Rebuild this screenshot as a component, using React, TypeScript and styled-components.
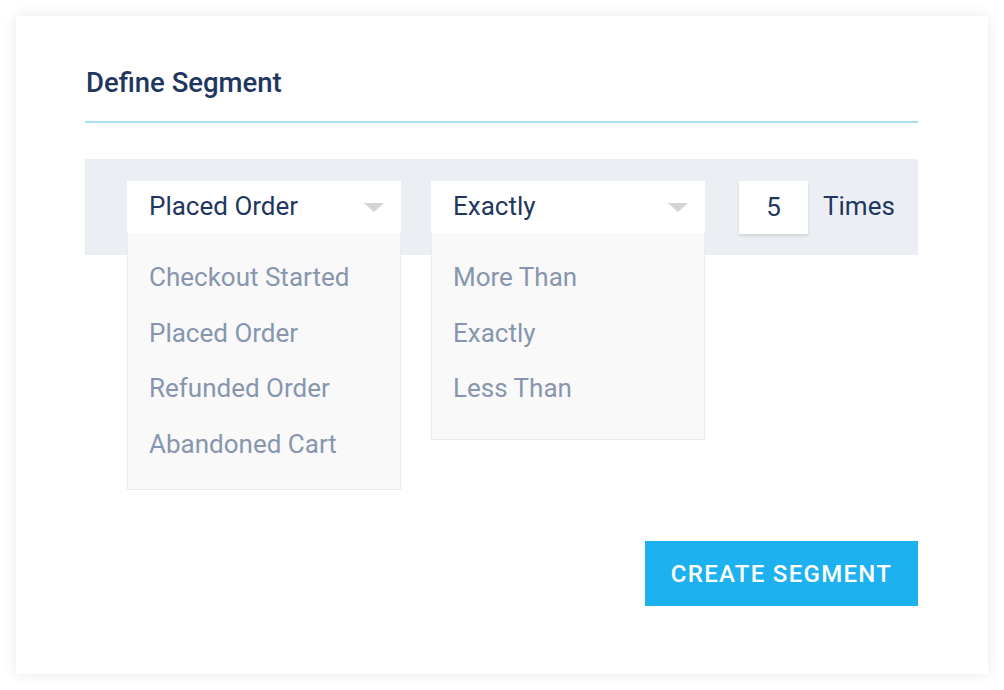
import React from "react";
import styled, { createGlobalStyle } from "styled-components";

const GlobalStyle = createGlobalStyle`
  html, body {
    margin: 0;
    padding: 0;
    background: #ffffff;
    font-family: Roboto, "Liberation Sans", sans-serif;
  }
`;

const Page = styled.div`
  width: 1004px;
  height: 690px;
  padding: 16px;
  box-sizing: border-box;
`;

const Card = styled.section`
  width: 972px;
  height: 658px;
  box-sizing: border-box;
  background: #ffffff;
  box-shadow: 0 0 14px rgba(0, 0, 0, 0.09);
  padding: 51px 70px 68px 69px;
  display: flex;
  flex-direction: column;
`;

const Title = styled.h2`
  margin: 0;
  padding: 0 0 22px 1px;
  font-size: 27.5px;
  font-weight: 500;
  line-height: 32px;
  color: #1f375f;
  border-bottom: 2px solid #a6dff6;
`;

const Band = styled.div`
  margin-top: 36px;
  height: 96px;
  box-sizing: border-box;
  background: #ebeff4;
  padding: 22px 0 0 42px;
  display: flex;
  align-items: flex-start;
`;

const SelectWrap = styled.div<{ $gap?: number }>`
  position: relative;
  width: 274px;
  margin-right: ${(p) => p.$gap ?? 0}px;
`;

const SelectBox = styled.div`
  height: 52px;
  box-sizing: border-box;
  background: #ffffff;
  display: flex;
  align-items: center;
  justify-content: space-between;
  padding: 0 17px 3px 22px;
  font-size: 26px;
  color: #1f375f;
`;

const Caret = styled.span`
  margin-top: 3px;
  width: 0;
  height: 0;
  border-left: 10px solid transparent;
  border-right: 10px solid transparent;
  border-top: 9px solid #d4d4d4;
`;

const Menu = styled.ul<{ $pb: number }>`
  position: absolute;
  top: 52px;
  left: 0;
  width: 274px;
  box-sizing: border-box;
  margin: 0;
  list-style: none;
  padding: 17px 0 ${(p) => p.$pb}px 0;
  background: #f9f9fa;
  border: 1.5px solid #e8ecf1;
  border-top: none;
`;

const MenuItem = styled.li`
  height: 55.5px;
  line-height: 55px;
  padding-left: 21px;
  font-size: 26px;
  color: #8796ad;
  white-space: nowrap;
`;

const CountBox = styled.div`
  width: 69px;
  height: 53px;
  background: #ffffff;
  box-shadow: 0 2px 3px rgba(0, 0, 0, 0.12);
  display: flex;
  align-items: center;
  justify-content: center;
  padding-bottom: 2px;
  box-sizing: border-box;
  font-size: 26px;
  color: #1f375f;
`;

const Unit = styled.span`
  margin-left: 15px;
  line-height: 50px;
  font-size: 26px;
  color: #1f375f;
`;

const Footer = styled.div`
  margin-top: auto;
  display: flex;
  justify-content: flex-end;
`;

const PrimaryButton = styled.button`
  width: 273px;
  height: 65px;
  padding: 0;
  border: none;
  background: #1eb1f0;
  color: #ffffff;
  font-family: Roboto, "Liberation Sans", sans-serif;
  font-size: 24px;
  font-weight: 500;
  letter-spacing: 1.3px;
  text-transform: uppercase;
  cursor: pointer;
`;

const events = ["Checkout Started", "Placed Order", "Refunded Order", "Abandoned Cart"];
const comparisons = ["More Than", "Exactly", "Less Than"];

export default function App() {
  return (
    <>
      <GlobalStyle />
      <Page>
        <Card>
          <Title>Define Segment</Title>
          <Band>
            <SelectWrap $gap={30}>
              <SelectBox>
                Placed Order
                <Caret />
              </SelectBox>
              <Menu $pb={17}>
                {events.map((e) => (
                  <MenuItem key={e}>{e}</MenuItem>
                ))}
              </Menu>
            </SelectWrap>
            <SelectWrap $gap={34}>
              <SelectBox>
                Exactly
                <Caret />
              </SelectBox>
              <Menu $pb={22}>
                {comparisons.map((c) => (
                  <MenuItem key={c}>{c}</MenuItem>
                ))}
              </Menu>
            </SelectWrap>
            <CountBox>5</CountBox>
            <Unit>Times</Unit>
          </Band>
          <Footer>
            <PrimaryButton>Create Segment</PrimaryButton>
          </Footer>
        </Card>
      </Page>
    </>
  );
}
